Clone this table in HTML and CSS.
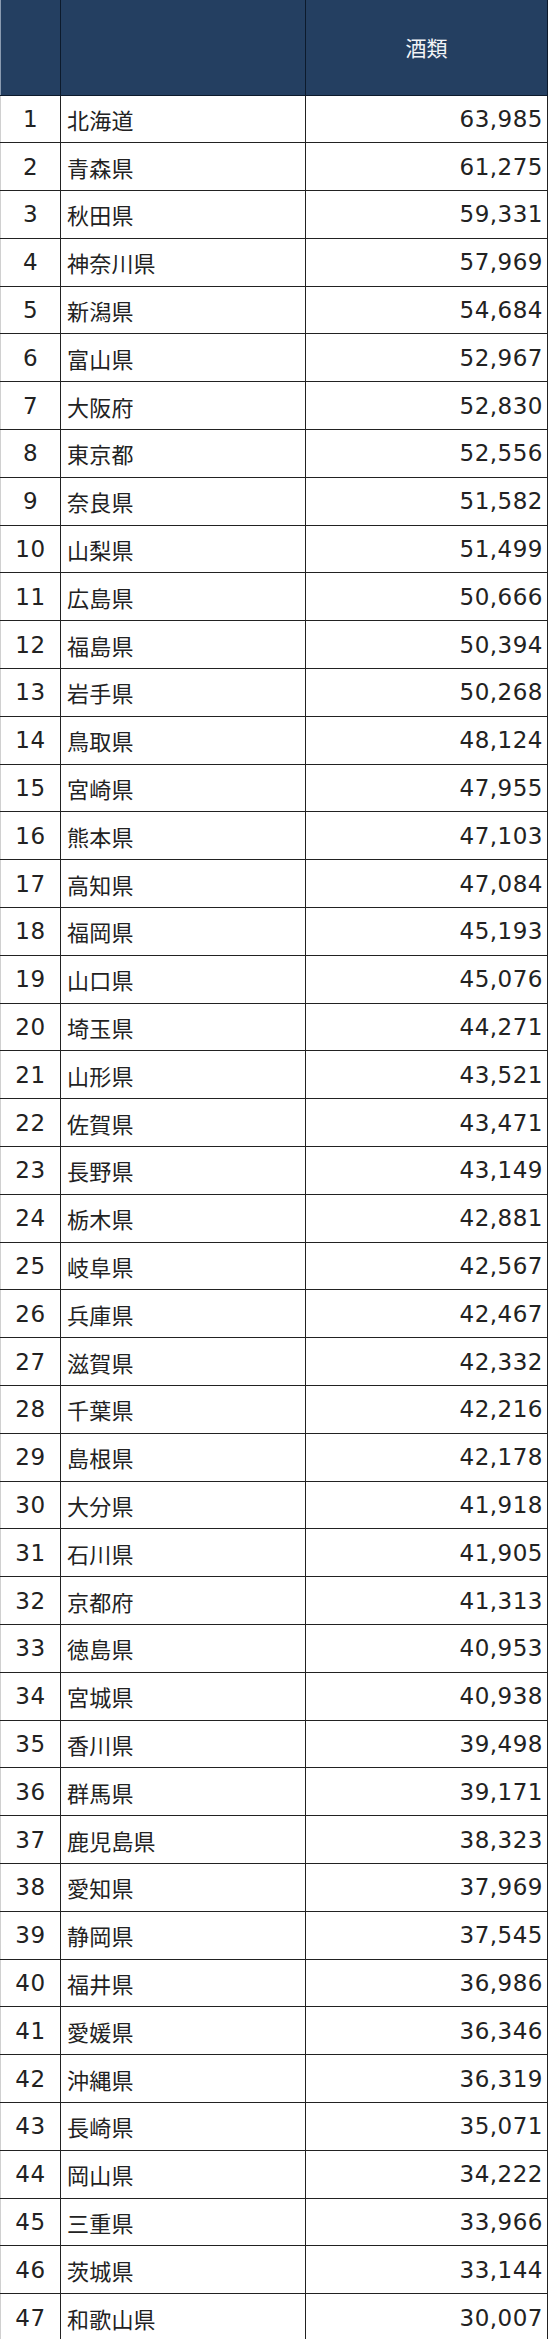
FILE: index.html
```html
<!DOCTYPE html>
<html lang="ja">
<head>
<meta charset="utf-8">
<link rel="stylesheet" href="styles.css">
</head>
<body>
<table class="rank">
<thead>
<tr><th class="c-no"></th><th class="c-pref"></th><th class="c-val">酒類</th></tr>
</thead>
<tbody>
<tr><td class="c-no">1</td><td class="c-pref">北海道</td><td class="c-val">63,985</td></tr>
<tr><td class="c-no">2</td><td class="c-pref">青森県</td><td class="c-val">61,275</td></tr>
<tr><td class="c-no">3</td><td class="c-pref">秋田県</td><td class="c-val">59,331</td></tr>
<tr><td class="c-no">4</td><td class="c-pref">神奈川県</td><td class="c-val">57,969</td></tr>
<tr><td class="c-no">5</td><td class="c-pref">新潟県</td><td class="c-val">54,684</td></tr>
<tr><td class="c-no">6</td><td class="c-pref">富山県</td><td class="c-val">52,967</td></tr>
<tr><td class="c-no">7</td><td class="c-pref">大阪府</td><td class="c-val">52,830</td></tr>
<tr><td class="c-no">8</td><td class="c-pref">東京都</td><td class="c-val">52,556</td></tr>
<tr><td class="c-no">9</td><td class="c-pref">奈良県</td><td class="c-val">51,582</td></tr>
<tr><td class="c-no">10</td><td class="c-pref">山梨県</td><td class="c-val">51,499</td></tr>
<tr><td class="c-no">11</td><td class="c-pref">広島県</td><td class="c-val">50,666</td></tr>
<tr><td class="c-no">12</td><td class="c-pref">福島県</td><td class="c-val">50,394</td></tr>
<tr><td class="c-no">13</td><td class="c-pref">岩手県</td><td class="c-val">50,268</td></tr>
<tr><td class="c-no">14</td><td class="c-pref">鳥取県</td><td class="c-val">48,124</td></tr>
<tr><td class="c-no">15</td><td class="c-pref">宮崎県</td><td class="c-val">47,955</td></tr>
<tr><td class="c-no">16</td><td class="c-pref">熊本県</td><td class="c-val">47,103</td></tr>
<tr><td class="c-no">17</td><td class="c-pref">高知県</td><td class="c-val">47,084</td></tr>
<tr><td class="c-no">18</td><td class="c-pref">福岡県</td><td class="c-val">45,193</td></tr>
<tr><td class="c-no">19</td><td class="c-pref">山口県</td><td class="c-val">45,076</td></tr>
<tr><td class="c-no">20</td><td class="c-pref">埼玉県</td><td class="c-val">44,271</td></tr>
<tr><td class="c-no">21</td><td class="c-pref">山形県</td><td class="c-val">43,521</td></tr>
<tr><td class="c-no">22</td><td class="c-pref">佐賀県</td><td class="c-val">43,471</td></tr>
<tr><td class="c-no">23</td><td class="c-pref">長野県</td><td class="c-val">43,149</td></tr>
<tr><td class="c-no">24</td><td class="c-pref">栃木県</td><td class="c-val">42,881</td></tr>
<tr><td class="c-no">25</td><td class="c-pref">岐阜県</td><td class="c-val">42,567</td></tr>
<tr><td class="c-no">26</td><td class="c-pref">兵庫県</td><td class="c-val">42,467</td></tr>
<tr><td class="c-no">27</td><td class="c-pref">滋賀県</td><td class="c-val">42,332</td></tr>
<tr><td class="c-no">28</td><td class="c-pref">千葉県</td><td class="c-val">42,216</td></tr>
<tr><td class="c-no">29</td><td class="c-pref">島根県</td><td class="c-val">42,178</td></tr>
<tr><td class="c-no">30</td><td class="c-pref">大分県</td><td class="c-val">41,918</td></tr>
<tr><td class="c-no">31</td><td class="c-pref">石川県</td><td class="c-val">41,905</td></tr>
<tr><td class="c-no">32</td><td class="c-pref">京都府</td><td class="c-val">41,313</td></tr>
<tr><td class="c-no">33</td><td class="c-pref">徳島県</td><td class="c-val">40,953</td></tr>
<tr><td class="c-no">34</td><td class="c-pref">宮城県</td><td class="c-val">40,938</td></tr>
<tr><td class="c-no">35</td><td class="c-pref">香川県</td><td class="c-val">39,498</td></tr>
<tr><td class="c-no">36</td><td class="c-pref">群馬県</td><td class="c-val">39,171</td></tr>
<tr><td class="c-no">37</td><td class="c-pref">鹿児島県</td><td class="c-val">38,323</td></tr>
<tr><td class="c-no">38</td><td class="c-pref">愛知県</td><td class="c-val">37,969</td></tr>
<tr><td class="c-no">39</td><td class="c-pref">静岡県</td><td class="c-val">37,545</td></tr>
<tr><td class="c-no">40</td><td class="c-pref">福井県</td><td class="c-val">36,986</td></tr>
<tr><td class="c-no">41</td><td class="c-pref">愛媛県</td><td class="c-val">36,346</td></tr>
<tr><td class="c-no">42</td><td class="c-pref">沖縄県</td><td class="c-val">36,319</td></tr>
<tr><td class="c-no">43</td><td class="c-pref">長崎県</td><td class="c-val">35,071</td></tr>
<tr><td class="c-no">44</td><td class="c-pref">岡山県</td><td class="c-val">34,222</td></tr>
<tr><td class="c-no">45</td><td class="c-pref">三重県</td><td class="c-val">33,966</td></tr>
<tr><td class="c-no">46</td><td class="c-pref">茨城県</td><td class="c-val">33,144</td></tr>
<tr><td class="c-no">47</td><td class="c-pref">和歌山県</td><td class="c-val">30,007</td></tr>
</tbody>
</table>
</body>
</html>
```
FILE: styles.css
```css
html, body {
  margin: 0;
  padding: 0;
  background: #ffffff;
}

.rank {
  border-collapse: collapse;
  table-layout: fixed;
  width: 548px;
  font-family: "DejaVu Sans", "Noto Sans CJK JP", sans-serif;
  color: #222222;
}

.rank th {
  box-sizing: border-box;
  height: 95px;
  padding: 0;
  background: #243f61;
  color: #f2f4f7;
  font-family: "Noto Sans CJK JP", sans-serif;
  font-weight: normal;
  font-size: 21px;
  border-left: 1px solid #0c1a2c;
  border-right: 1px solid #0c1a2c;
  border-bottom: 1px solid #0c1a2c;
}

.rank th.c-no {
  border-left: 1px solid #8a9bb0;
}

.rank th.c-val {
  text-align: center;
  padding: 0;
}

.rank td {
  box-sizing: border-box;
  height: 47.8px;
  padding: 0;
  line-height: 26px;
  border: 1px solid #222222;
  font-size: 23px;
  letter-spacing: 0.5px;
}

.rank td.c-no {
  border-left: 1px solid #d0d0d0;
}

.rank .c-no {
  width: 60px;
  text-align: center;
}

.rank .c-pref {
  width: 245px;
  text-align: left;
  padding-left: 6px;
  font-family: "Noto Sans CJK JP", sans-serif;
  font-size: 22px;
  letter-spacing: 0.2px;
}

.rank th.c-pref {
  padding: 0;
}

.rank td.c-val {
  text-align: right;
  padding-right: 4px;
}
```
